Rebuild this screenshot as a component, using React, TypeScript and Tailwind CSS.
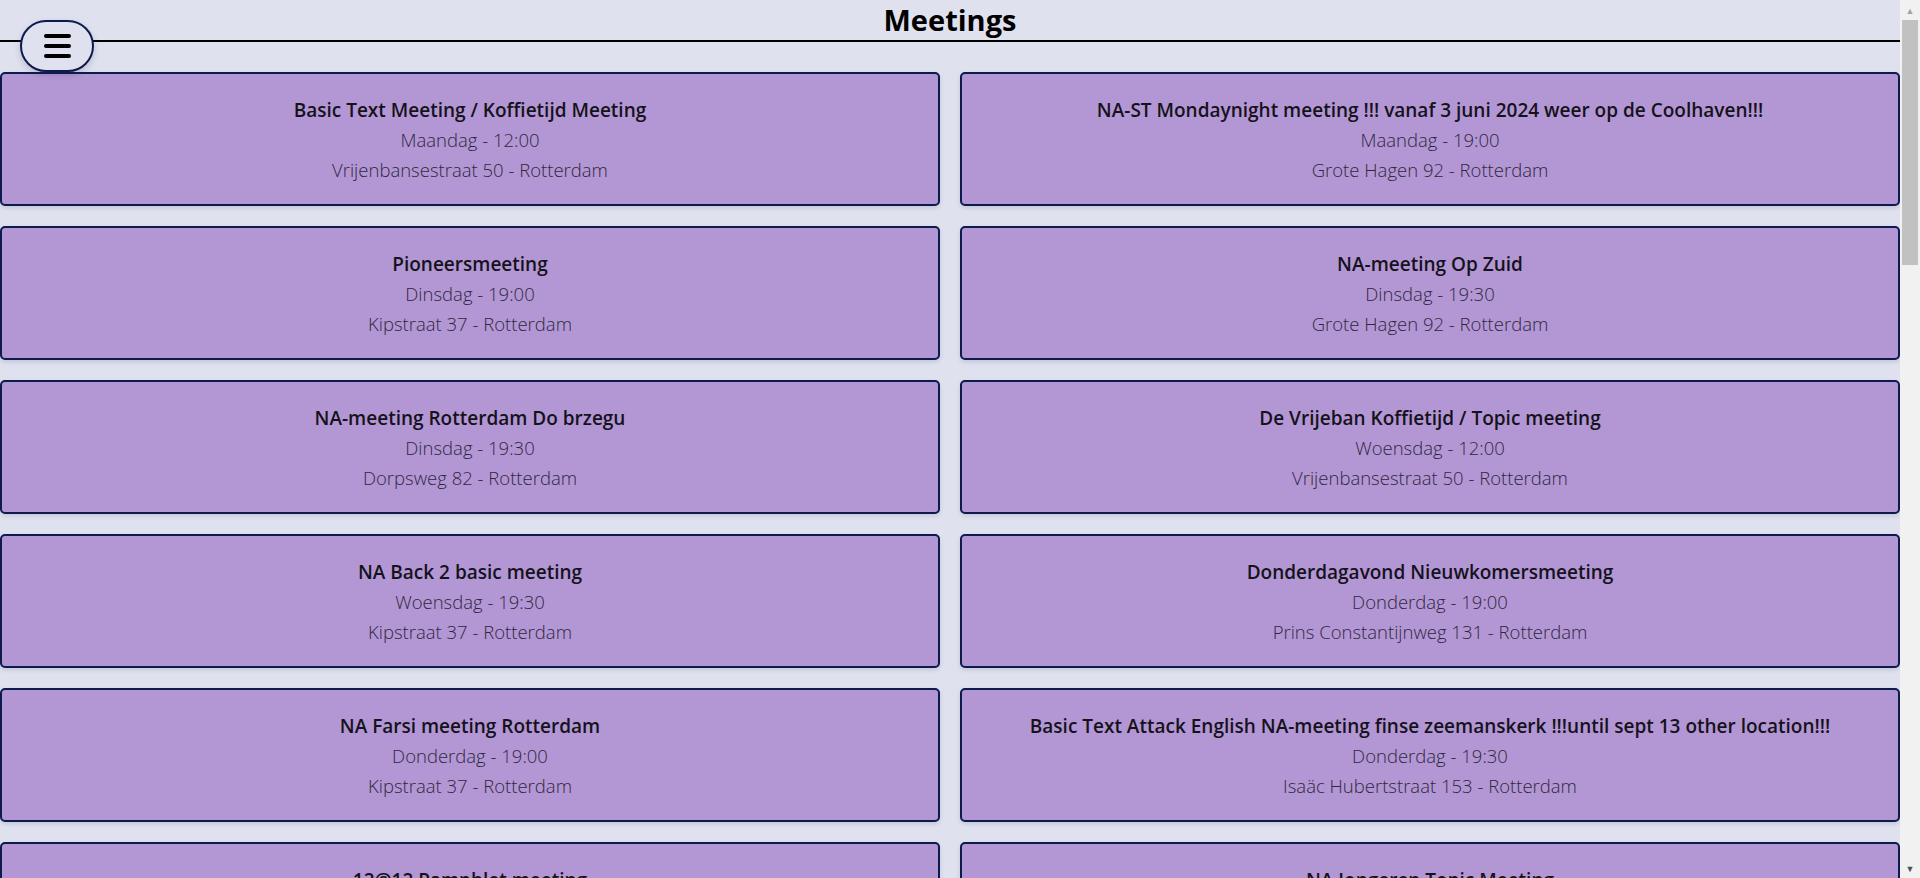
import React from "react";

type Meeting = { name: string; when: string; where: string };

const meetings: Meeting[] = [
  { name: "Basic Text Meeting / Koffietijd Meeting", when: "Maandag - 12:00", where: "Vrijenbansestraat 50 - Rotterdam" },
  { name: "NA-ST Mondaynight meeting !!! vanaf 3 juni 2024 weer op de Coolhaven!!!", when: "Maandag - 19:00", where: "Grote Hagen 92 - Rotterdam" },
  { name: "Pioneersmeeting", when: "Dinsdag - 19:00", where: "Kipstraat 37 - Rotterdam" },
  { name: "NA-meeting Op Zuid", when: "Dinsdag - 19:30", where: "Grote Hagen 92 - Rotterdam" },
  { name: "NA-meeting Rotterdam Do brzegu", when: "Dinsdag - 19:30", where: "Dorpsweg 82 - Rotterdam" },
  { name: "De Vrijeban Koffietijd / Topic meeting", when: "Woensdag - 12:00", where: "Vrijenbansestraat 50 - Rotterdam" },
  { name: "NA Back 2 basic meeting", when: "Woensdag - 19:30", where: "Kipstraat 37 - Rotterdam" },
  { name: "Donderdagavond Nieuwkomersmeeting", when: "Donderdag - 19:00", where: "Prins Constantijnweg 131 - Rotterdam" },
  { name: "NA Farsi meeting Rotterdam", when: "Donderdag - 19:00", where: "Kipstraat 37 - Rotterdam" },
  { name: "Basic Text Attack English NA-meeting finse zeemanskerk !!!until sept 13 other location!!!", when: "Donderdag - 19:30", where: "Isaäc Hubertstraat 153 - Rotterdam" },
  { name: "12@12 Pamphlet meeting", when: "Vrijdag - 12:00", where: "Vrijenbansestraat 50 - Rotterdam" },
  { name: "NA Jongeren Topic Meeting", when: "Vrijdag - 19:00", where: "Kipstraat 37 - Rotterdam" },
];

function MeetingCard({ m }: { m: Meeting }) {
  return (
    <div className="h-[134px] shrink-0 rounded-[5px] border-2 border-[#0c1b4b] bg-[#b397d4] pt-[21px] pb-[19px] px-4 text-center shadow-[0_2px_4px_rgba(40,40,80,0.15)]">
      <div className="text-[19px] leading-[30px] font-semibold text-[#15121c] whitespace-nowrap">{m.name}</div>
      <div className="text-[18.5px] leading-[30px] font-light text-[#30273f]">{m.when}</div>
      <div className="text-[18.5px] leading-[30px] font-light text-[#30273f]">{m.where}</div>
    </div>
  );
}

function FakeScrollbar() {
  return (
    <div className="w-[20px] h-[878px] shrink-0 bg-[#f1f1f1] flex flex-col items-center">
      <div className="h-[20px] w-full flex items-center justify-center text-[9px] leading-none text-[#a3a3a3]">▲</div>
      <div className="w-[16px] h-[245px] bg-[#c1c1c1]" />
      <div className="flex-1" />
      <div className="h-[20px] w-full flex items-center justify-center text-[9px] leading-none text-[#505050]">▼</div>
    </div>
  );
}

export default function App() {
  return (
    <div
      className="h-[878px] overflow-hidden bg-[#e0e1ef] flex"
      style={{ fontFamily: '"Open Sans", "Noto Sans", sans-serif' }}
    >
      <div className="relative flex-1 min-w-0 h-[878px] overflow-hidden">
        <header className="h-[42px] border-b-2 border-black flex items-center justify-center">
          <h1 className="text-[29px] leading-[40px] font-bold text-black">Meetings</h1>
        </header>
        <button
          type="button"
          aria-label="Menu"
          className="absolute left-[20px] top-[20px] w-[74px] h-[52px] rounded-full border-2 border-[#0c1b4b] bg-[#e0e1ef] flex flex-col items-center justify-center gap-[6px] shadow-[0_3px_6px_rgba(40,40,80,0.2)]"
        >
          <span className="block w-[27px] h-[4px] rounded-full bg-black" />
          <span className="block w-[27px] h-[4px] rounded-full bg-black" />
          <span className="block w-[27px] h-[4px] rounded-full bg-black" />
        </button>
        <main className="grid grid-cols-2 gap-x-[20px] gap-y-[20px] pt-[30px] pb-[30px]">
          {meetings.map((m, i) => (
            <MeetingCard key={i} m={m} />
          ))}
        </main>
      </div>
      <FakeScrollbar />
    </div>
  );
}
